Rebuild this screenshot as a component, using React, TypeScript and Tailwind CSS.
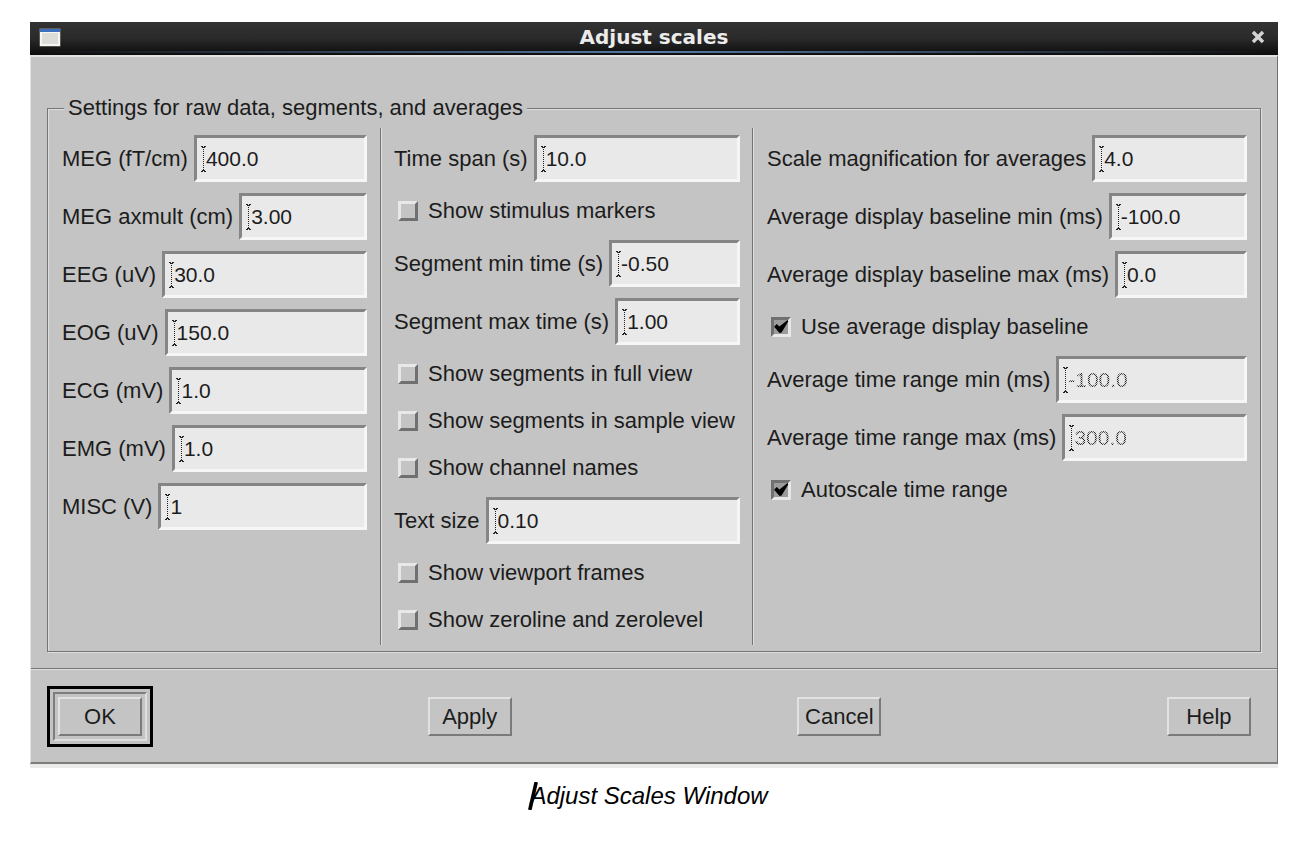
import React, { useId, useState } from "react";

type FieldProps = { label: string; value: string; disabled?: boolean };

function InsertionMark() {
  return (
    <svg
      aria-hidden="true"
      viewBox="0 0 5 26"
      className="h-[26px] w-[5px] shrink-0"
      shapeRendering="crispEdges"
    >
      <path d="M0 .5H2M3 .5H5M1 1.5H4M1 24.5H4M0 25.5H2M3 25.5H5" stroke="#222" strokeWidth="1" />
      <path d="M2.5 3V24" stroke="#222" strokeWidth="1" strokeDasharray="1 1" />
    </svg>
  );
}

function Field({ label, value, disabled = false }: FieldProps) {
  const id = useId();
  const [text, setText] = useState(value);
  const tone = disabled
    ? "bg-[repeating-conic-gradient(#222222_0_25%,#d8d8d8_0_50%)] bg-[size:2px_2px] bg-clip-text text-transparent"
    : "bg-transparent text-[#1c1c1c]";
  return (
    <div className="flex items-center gap-[6px]">
      <label htmlFor={id} className="shrink-0 whitespace-nowrap">
        {label}
      </label>
      <div className="flex h-[47px] min-w-0 flex-1 items-center border-[3px] border-t-[#858585] border-r-[#f6f6f6] border-b-[#f6f6f6] border-l-[#858585] bg-[#e9e9e9] pl-[4px]">
        <InsertionMark />
        <input
          id={id}
          type="text"
          value={text}
          disabled={disabled}
          onChange={(e) => setText(e.target.value)}
          className={`h-full w-full min-w-0 text-[21px] outline-none ${tone}`}
        />
      </div>
    </div>
  );
}

function Toggle({ label, checked = false }: { label: string; checked?: boolean }) {
  const [on, setOn] = useState(checked);
  const box = on
    ? "border-t-[#707070] border-r-[#e8e8e8] border-b-[#e8e8e8] border-l-[#707070] bg-[#9c9c9c]"
    : "border-t-[#e8e8e8] border-r-[#707070] border-b-[#707070] border-l-[#e8e8e8] bg-[#c4c4c4]";
  return (
    <label className="flex h-[36px] items-center gap-[10px] pl-[4px] whitespace-nowrap">
      <span className="grid size-[20px] shrink-0">
        <input
          type="checkbox"
          checked={on}
          onChange={(e) => setOn(e.target.checked)}
          className={`size-[20px] appearance-none border-[3px] [grid-area:1/1] ${box}`}
        />
        {on && (
          <svg
            aria-hidden="true"
            viewBox="0 0 20 20"
            className="pointer-events-none size-[20px] [grid-area:1/1]"
          >
            <path d="M3 9.8L5.8 7L8.4 9.4L16.6 3L17.2 4.4L10.6 15.4L8.6 16Z" fill="#000" />
          </svg>
        )}
      </span>
      {label}
    </label>
  );
}

const pushButton =
  "h-[39px] w-[84px] border-2 border-t-[#e2e2e2] border-r-[#7a7a7a] border-b-[#7a7a7a] border-l-[#e2e2e2] bg-[#c4c4c4] text-center leading-[26px] text-[#1c1c1c]";

function FooterButton({ label }: { label: string }) {
  return (
    <div className="p-[11px]">
      <button type="button" className={pushButton}>
        {label}
      </button>
    </div>
  );
}

const column = "flex flex-col gap-[11px]";
const rule = "border-r border-r-[#747474] shadow-[1px_0_0_#dedede]";

export default function App() {
  return (
    <main className="min-h-screen bg-white pt-[22px] pb-[20px] font-['Liberation_Sans',Arial,sans-serif] text-[22px] leading-[26px] text-[#1c1c1c]">
      <section aria-label="Adjust scales" className="mr-[20px] ml-[30px] bg-[#ebebe9] pb-[4px]">
        <header className="relative flex h-[33px] items-center justify-between bg-linear-to-b from-[#333333] via-[#2a2a2a] to-[#0c0c0c] px-[9px] pb-[3px]">
          <svg aria-hidden="true" viewBox="0 0 22 19" className="h-[19px] w-[22px]">
            <rect x=".5" y=".5" width="21" height="18" fill="#8c8c88" />
            <rect x="1" y="1" width="20" height="4" fill="#3c70bd" />
            <rect x="1" y="4" width="20" height="14" fill="#f6f6f2" />
            <rect x="3" y="5" width="16" height="11" fill="#dcddd8" />
          </svg>
          <h1 className="font-['DejaVu_Sans',sans-serif] text-[20px] font-bold text-[#ececec]">
            Adjust scales
          </h1>
          <button type="button" aria-label="Close" className="w-[22px] pl-[4px]">
            <svg aria-hidden="true" viewBox="0 0 14 14" className="size-[14px]">
              <path d="M2 2L12 12M12 2L2 12" stroke="#d4d4d4" strokeWidth="3.4" />
            </svg>
          </button>
          <div className="absolute inset-x-[10px] bottom-[2px] h-[2px] bg-linear-to-r from-transparent via-[#567aa6] to-transparent" />
        </header>

        <div className="border-t-2 border-r border-b-2 border-l border-t-[#e2e2e2] border-r-[#707070] border-b-[#7d7d7d] border-l-[#e2e2e2] bg-[#c4c4c4]">
          <div className="px-[16px] pt-[38px] pb-[16px]">
            <fieldset className="border border-[#747474] pb-[6px] shadow-[1px_1px_0_#dedede,inset_1px_1px_0_#dedede]">
              <legend className="ml-[16px] bg-[#c4c4c4] px-[4px]">
                Settings for raw data, segments, and averages
              </legend>
              <div className="grid h-[524px] grid-cols-[333fr_372fr_507fr] pt-[7px]">
                <div className={`${rule} pr-[13px] pl-[14px]`}>
                  <div className={`${column} pt-[7px]`}>
                    <Field label="MEG (fT/cm)" value="400.0" />
                    <Field label="MEG axmult (cm)" value="3.00" />
                    <Field label="EEG (uV)" value="30.0" />
                    <Field label="EOG (uV)" value="150.0" />
                    <Field label="ECG (mV)" value="1.0" />
                    <Field label="EMG (mV)" value="1.0" />
                    <Field label="MISC (V)" value="1" />
                  </div>
                </div>
                <div className={`${rule} pr-[12px] pl-[13px]`}>
                  <div className={`${column} pt-[7px]`}>
                    <Field label="Time span (s)" value="10.0" />
                    <Toggle label="Show stimulus markers" />
                    <Field label="Segment min time (s)" value="-0.50" />
                    <Field label="Segment max time (s)" value="1.00" />
                    <Toggle label="Show segments in full view" />
                    <Toggle label="Show segments in sample view" />
                    <Toggle label="Show channel names" />
                    <Field label="Text size" value="0.10" />
                    <Toggle label="Show viewport frames" />
                    <Toggle label="Show zeroline and zerolevel" />
                  </div>
                </div>
                <div className="pr-[13px] pl-[14px]">
                  <div className={`${column} pt-[7px]`}>
                    <Field label="Scale magnification for averages" value="4.0" />
                    <Field label="Average display baseline min (ms)" value="-100.0" />
                    <Field label="Average display baseline max (ms)" value="0.0" />
                    <Toggle label="Use average display baseline" checked />
                    <Field label="Average time range min (ms)" value="-100.0" disabled />
                    <Field label="Average time range max (ms)" value="300.0" disabled />
                    <Toggle label="Autoscale time range" checked />
                  </div>
                </div>
              </div>
            </fieldset>
          </div>

          <div className="flex items-center justify-between border-t border-t-[#747474] pt-[17px] pr-[15px] pb-[15px] pl-[16px] shadow-[inset_0_1px_0_#dedede]">
            <div className="border-[3px] border-black p-[3px]">
              <div className="border-2 border-t-[#7d7d7d] border-r-[#dedede] border-b-[#dedede] border-l-[#7d7d7d] p-[3px]">
                <button type="button" className={pushButton}>
                  OK
                </button>
              </div>
            </div>
            <FooterButton label="Apply" />
            <FooterButton label="Cancel" />
            <FooterButton label="Help" />
          </div>
        </div>
      </section>

      <p className="mt-[14px] flex justify-center text-[24px] leading-[28px] text-black italic">
        <span className="relative">
          <svg
            aria-hidden="true"
            viewBox="0 0 10 28"
            className="absolute top-0 -left-[2px] h-[28px] w-[10px]"
          >
            <path d="M1.8 28L8.2 0" stroke="#000" strokeWidth="3.6" />
          </svg>
          Adjust Scales Window
        </span>
      </p>
    </main>
  );
}
